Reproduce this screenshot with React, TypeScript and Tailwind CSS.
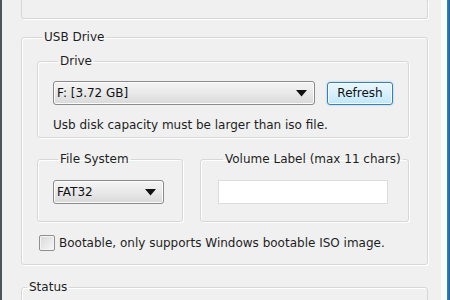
const font = { fontFamily: '"DejaVu Sans", Tahoma, Verdana, sans-serif' };

function Legend({ children }: { children: React.ReactNode }) {
    return (
        <legend className="ml-[5px] px-[2px] text-[12px] leading-[15px] whitespace-nowrap text-[#1e1e1e]">
            {children}
        </legend>
    );
}

function Combo({ value, width }: { value: string; width: string }) {
    return (
        <div
            className={`${width} h-[24px] flex items-center justify-between pl-[3px] pr-[7px] rounded-[3px] border border-[#8a8a8a] bg-gradient-to-b from-[#f4f4f4] via-[#e9e9e9] to-[#d9d9d9] shadow-[inset_0_0_0_1px_#fcfcfc] text-[12px] text-[#111]`}
        >
            <span>{value}</span>
            <svg width="11" height="7" viewBox="0 0 11 7">
                <path d="M0 0 H11 L5.5 6.5 Z" fill="#111" />
            </svg>
        </div>
    );
}

export default function App() {
    return (
        <div className="w-[450px] h-[300px] overflow-hidden flex bg-[#f0f0f0]" style={font}>
            {/* left window edge */}
            <div className="w-[2px] shrink-0 bg-[#4d5358]" />

            <div className="flex-1 flex flex-col pl-[19px] pr-[12px]">
                {/* previous group (cut off) */}
                <div className="shrink-0 h-[19px] w-[407px] border-x border-b border-[#d7d7d7] rounded-b-[3px] shadow-[1px_1px_0_#fff]" />

                {/* USB Drive */}
                <fieldset className="shrink-0 mt-[11px] w-[407px] border border-[#d7d7d7] rounded-[3px] pl-[15px] pr-[18px] pb-[13px] shadow-[1px_1px_0_#fff,inset_1px_1px_0_#fff]">
                    <Legend>USB Drive</Legend>

                    <fieldset className="mt-[9px] border border-[#d7d7d7] rounded-[3px] pl-[15px] pr-[14px] pb-[4px] shadow-[1px_1px_0_#fff,inset_1px_1px_0_#fff]">
                        <Legend>Drive</Legend>
                        <div className="mt-[12px] flex items-center gap-[12px]">
                            <Combo value="F: [3.72 GB]" width="w-[262px]" />
                            <button className="w-[66px] h-[23px] rounded-[3px] border border-[#3c7fb1] bg-gradient-to-b from-[#eaf6fd] via-[#d9f0fc] to-[#bee6fd] shadow-[0_0_2px_#7ec4ea,inset_0_0_0_1px_#f4fbff] text-[12px] text-[#111]">
                                Refresh
                            </button>
                        </div>
                        <div className="mt-[13px] text-[12px] leading-[15px] text-[#1e1e1e]">
                            Usb disk capacity must be larger than iso file.
                        </div>
                    </fieldset>

                    <div className="mt-[14px] flex gap-[17px]">
                        <fieldset className="w-[146px] border border-[#d7d7d7] rounded-[3px] pl-[15px] pb-[17px] shadow-[1px_1px_0_#fff,inset_1px_1px_0_#fff]">
                            <Legend>File System</Legend>
                            <div className="mt-[13px]">
                                <Combo value="FAT32" width="w-[111px]" />
                            </div>
                        </fieldset>
                        <fieldset className="flex-1 border border-[#d7d7d7] rounded-[3px] pl-[17px] pb-[17px] shadow-[1px_1px_0_#fff,inset_1px_1px_0_#fff]">
                            <Legend>Volume Label (max 11 chars)</Legend>
                            <div className="mt-[13px] w-[170px] h-[24px] bg-white border border-[#dcdcdc]" />
                        </fieldset>
                    </div>

                    <label className="mt-[13px] ml-[2px] flex items-center gap-[4px] text-[12px] leading-[16px] whitespace-nowrap text-[#1e1e1e]">
                        <span className="w-[16px] h-[16px] shrink-0 border border-[#8e8f8f] rounded-[2px] bg-gradient-to-br from-[#d8d8d8] to-[#f7f7f7] shadow-[inset_0_0_0_1px_#f4f4f4]" />
                        Bootable, only supports Windows bootable ISO image.
                    </label>
                </fieldset>

                {/* Status */}
                <fieldset className="shrink-0 mt-[15px] w-[407px] h-[40px] border border-[#d7d7d7] rounded-[3px] shadow-[inset_1px_1px_0_#fff]">
                    <Legend>Status</Legend>
                </fieldset>
            </div>

            {/* right window edge */}
            <div className="w-[6px] shrink-0 bg-[#fbfbfb]" />
            <div className="w-[3px] shrink-0 bg-gradient-to-r from-[#3d86c6] to-[#1f5f99]" />
        </div>
    );
}
